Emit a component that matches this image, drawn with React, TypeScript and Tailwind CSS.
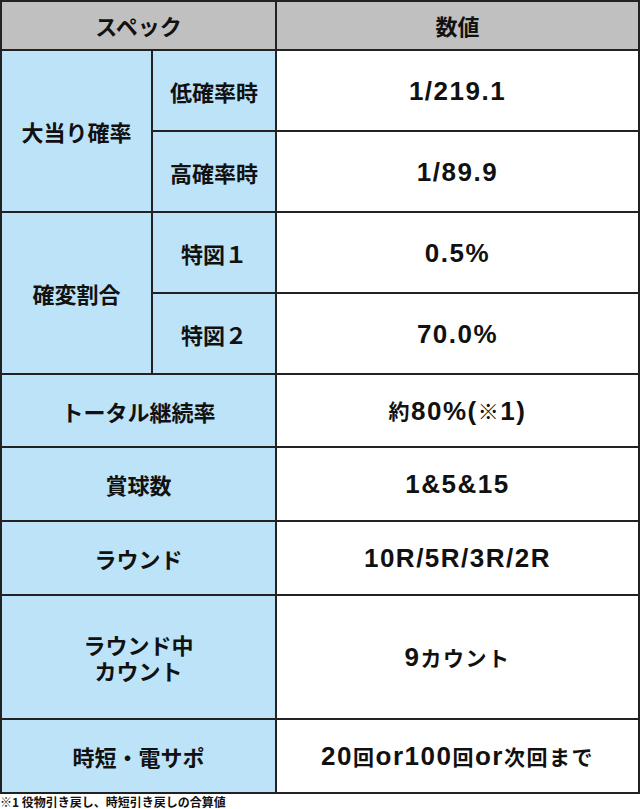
import React from "react";

const JP = { fontFamily: '"Noto Sans CJK JP", "Noto Sans", sans-serif' };
const LAT = { fontFamily: '"Liberation Sans", "Noto Sans CJK JP", sans-serif' };

function isCJK(ch: string) {
  return /[\u3000-\u9fff\uff00-\uffef\u203b]/.test(ch);
}

function Value({ text }: { text: string }) {
  const runs: { cjk: boolean; s: string }[] = [];
  for (const ch of text) {
    const c = isCJK(ch);
    const last = runs[runs.length - 1];
    if (last && last.cjk === c) last.s += ch;
    else runs.push({ cjk: c, s: ch });
  }
  return (
    <div className="flex items-center justify-center bg-white font-bold text-[#111] tracking-[1.5px] whitespace-nowrap">
      {runs.map((r, i) =>
        r.cjk ? (
          <span key={i} style={JP} className="text-[21px] leading-none">
            {r.s}
          </span>
        ) : (
          <span key={i} style={LAT} className="text-[26px] leading-none">
            {r.s}
          </span>
        )
      )}
    </div>
  );
}

function Label({ children, className = "" }: { children: React.ReactNode; className?: string }) {
  return (
    <div
      style={JP}
      className={`flex items-center justify-center bg-[#bde3f8] text-[22px] font-bold leading-[26px] text-[#111] text-center ${className}`}
    >
      <p>{children}</p>
    </div>
  );
}

export default function App() {
  return (
    <div className="w-[640px] h-[809px] bg-white">
      <div className="grid w-[640px] grid-cols-[149px_122px_361px] grid-rows-[47px_79px_79px_79px_79px_71px_72px_72px_122px_72px] gap-[2px] p-[2px] bg-[#222]">
        <div style={JP} className="col-span-2 flex items-center justify-center bg-[#c0c0c0] text-[22px] font-bold text-[#111]">
          スペック
        </div>
        <div style={JP} className="flex items-center justify-center bg-[#c0c0c0] text-[22px] font-bold text-[#111]">
          数値
        </div>

        <Label className="row-span-2">大当り確率</Label>
        <Label>低確率時</Label>
        <Value text="1/219.1" />
        <Label>高確率時</Label>
        <Value text="1/89.9" />

        <Label className="row-span-2">確変割合</Label>
        <Label>特図１</Label>
        <Value text="0.5%" />
        <Label>特図２</Label>
        <Value text="70.0%" />

        <Label className="col-span-2">トータル継続率</Label>
        <Value text="約80%(※1)" />

        <Label className="col-span-2">賞球数</Label>
        <Value text="1&5&15" />

        <Label className="col-span-2">ラウンド</Label>
        <Value text="10R/5R/3R/2R" />

        <Label className="col-span-2">
          ラウンド中
          <br />
          カウント
        </Label>
        <Value text="9カウント" />

        <Label className="col-span-2">時短・電サポ</Label>
        <Value text="20回or100回or次回まで" />
      </div>
      <div style={JP} className="text-[12px] font-bold leading-[15px] text-[#111] whitespace-nowrap">
        ※1 役物引き戻し、時短引き戻しの合算値
      </div>
    </div>
  );
}
